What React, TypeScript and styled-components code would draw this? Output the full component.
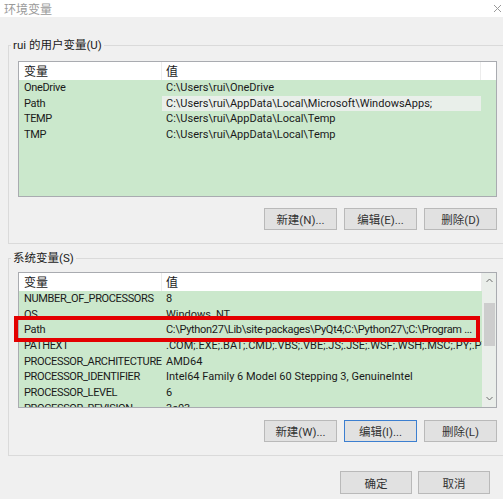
import React from "react";
import styled, { createGlobalStyle } from "styled-components";

const FONT = `Roboto, "Noto Sans CJK SC", sans-serif`;

const Global = createGlobalStyle`
  html, body { margin: 0; padding: 0; background: #f0f0f0; }
  body {
    font-family: ${FONT};
    font-size: 11px;
    color: #1a1a1a;
  }
`;

const Window = styled.div`
  width: 503px;
  height: 499px;
  overflow: hidden;
  display: flex;
  flex-direction: column;
  background: #f0f0f0;
`;

const TitleBar = styled.div`
  height: 17px;
  background: #ffffff;
  display: flex;
  align-items: center;
  justify-content: space-between;
  padding-left: 4px;
  color: #9a9a9a;
  font-family: "Noto Sans CJK SC", sans-serif;
  font-size: 12px;
`;

const Close = styled.svg`
  width: 7px;
  height: 7px;
  margin-right: 2px;
`;

const Body = styled.div`
  display: flex;
  flex-direction: column;
  padding: 20px 0 0 8px;
`;

const Group = styled.fieldset<{ $top?: number }>`
  margin: ${(p) => p.$top ?? 0}px -20px 0 0;
  padding: ${(p) => (p.$top ? 6 : 8)}px 0 13px 9px;
  border: 1px solid #dadada;
  border-right: none;
  min-width: 0;
`;

const Legend = styled.legend`
  margin-left: -7px;
  padding: 0 2px;
  line-height: 16px;
  font-family: ${FONT};
  font-size: 11.5px;
  color: #1a1a1a;
`;

const List = styled.div`
  position: relative;
  width: 479px;
  height: 136px;
  box-sizing: border-box;
  border: 1px solid #a9abb0;
  background: #cbe8cc;
  display: flex;
  overflow: hidden;
`;

const ListMain = styled.div`
  flex: 1;
  min-width: 0;
  display: flex;
  flex-direction: column;
`;

const Header = styled.div<{ $cols: string }>`
  height: 18px;
  flex: none;
  background: #ffffff;
  display: grid;
  grid-template-columns: ${(p) => p.$cols};
  align-items: stretch;
`;

const HeadCell = styled.div<{ $pad: number }>`
  padding-left: ${(p) => p.$pad}px;
  line-height: 18px;
  font-family: "Noto Sans CJK SC", sans-serif;
  font-size: 12px;
  border-right: 1px solid #ececec;
  white-space: nowrap;
`;

const Row = styled.div<{ $cols: string }>`
  height: 15.67px;
  flex: none;
  display: grid;
  grid-template-columns: ${(p) => p.$cols};
  line-height: 15.67px;
`;

const Cell = styled.div<{ $pad: number; $sel?: boolean; $ls?: number }>`
  padding-left: ${(p) => p.$pad}px;
  white-space: nowrap;
  overflow: hidden;
  letter-spacing: ${(p) => p.$ls ?? 0}px;
  background: ${(p) => (p.$sel ? "#e9efea" : "transparent")};
`;

const Scrollbar = styled.div`
  width: 14px;
  flex: none;
  background: #eaeeea;
  display: flex;
  flex-direction: column;
  align-items: center;
`;

const Arrow = styled.svg<{ $mt?: number; $mb?: number }>`
  width: 7px;
  height: 5px;
  flex: none;
  margin-top: ${(p) => p.$mt ?? 0}px;
  margin-bottom: ${(p) => p.$mb ?? 0}px;
`;

const Thumb = styled.div`
  width: 11px;
  height: 43px;
  background: #cdcdcd;
  margin-top: 20px;
`;

const Spacer = styled.div`
  flex: 1;
`;

const Highlight = styled.div`
  position: absolute;
  left: -4px;
  top: 44px;
  width: 466px;
  height: 26px;
  box-sizing: border-box;
  border: 4px solid #e30000;
  pointer-events: none;
`;

const ListWrap = styled.div`
  position: relative;
  width: 479px;
`;

const ButtonRow = styled.div<{ $mt: number }>`
  width: 479px;
  display: flex;
  justify-content: flex-end;
  gap: 7px;
  margin-top: ${(p) => p.$mt}px;
`;

const Button = styled.button<{ $focus?: boolean; $w?: number; $h?: number }>`
  width: ${(p) => p.$w ?? 73}px;
  height: ${(p) => p.$h ?? 22}px;
  box-sizing: border-box;
  background: #e1e1e1;
  border: 1px solid ${(p) => (p.$focus ? "#3c7fd0" : "#b9b9b9")};
  font-family: ${FONT};
  font-size: 11.5px;
  color: #333;
  padding: 0;
`;

const Footer = styled.div`
  display: flex;
  justify-content: flex-end;
  gap: 6px;
  padding: 15px 13px 0 0;
`;

const COLS1 = "143px 319px 1fr";
const COLS2 = "143px 1fr";
const NAME_LS = -0.35;

const userVars = [
  ["OneDrive", "C:\\Users\\rui\\OneDrive"],
  ["Path", "C:\\Users\\rui\\AppData\\Local\\Microsoft\\WindowsApps;"],
  ["TEMP", "C:\\Users\\rui\\AppData\\Local\\Temp"],
  ["TMP", "C:\\Users\\rui\\AppData\\Local\\Temp"],
];

const sysVars = [
  ["NUMBER_OF_PROCESSORS", "8"],
  ["OS", "Windows_NT"],
  ["Path", "C:\\Python27\\Lib\\site-packages\\PyQt4;C:\\Python27\\;C:\\Program ..."],
  ["PATHEXT", ".COM;.EXE;.BAT;.CMD;.VBS;.VBE;.JS;.JSE;.WSF;.WSH;.MSC;.PY;.PYW"],
  ["PROCESSOR_ARCHITECTURE", "AMD64"],
  ["PROCESSOR_IDENTIFIER", "Intel64 Family 6 Model 60 Stepping 3, GenuineIntel"],
  ["PROCESSOR_LEVEL", "6"],
  ["PROCESSOR_REVISION", "3c03"],
];

export default function App() {
  return (
    <Window>
      <Global />
      <TitleBar>
        <span>环境变量</span>
        <Close viewBox="0 0 7 7">
          <path d="M0 0L7 7M7 0L0 7" stroke="#9a9a9a" strokeWidth="1" />
        </Close>
      </TitleBar>
      <Body>
        <Group>
          <Legend>rui 的用户变量(U)</Legend>
          <List>
            <ListMain>
              <Header $cols={COLS1}>
                <HeadCell $pad={5}>变量</HeadCell>
                <HeadCell $pad={4}>值</HeadCell>
                <span />
              </Header>
              {userVars.map(([n, v]) => (
                <Row key={n} $cols={COLS1}>
                  <Cell $pad={5} $ls={NAME_LS}>{n}</Cell>
                  <Cell $pad={4} $sel={n === "Path"}>{v}</Cell>
                  <span />
                </Row>
              ))}
            </ListMain>
          </List>
          <ButtonRow $mt={11}>
            <Button>新建(N)...</Button>
            <Button>编辑(E)...</Button>
            <Button>删除(D)</Button>
          </ButtonRow>
        </Group>
        <Group $top={6}>
          <Legend>系统变量(S)</Legend>
          <ListWrap>
            <List>
              <ListMain>
                <Header $cols={COLS2}>
                  <HeadCell $pad={5}>变量</HeadCell>
                  <HeadCell $pad={4}>值</HeadCell>
                </Header>
                {sysVars.map(([n, v]) => (
                  <Row key={n} $cols={COLS2}>
                    <Cell $pad={5} $ls={NAME_LS}>{n}</Cell>
                    <Cell $pad={4} $ls={n === "Path" ? -0.3 : 0}>{v}</Cell>
                  </Row>
                ))}
              </ListMain>
              <Scrollbar>
                <Arrow viewBox="0 0 7 5" $mt={5}>
                  <path d="M0.5 4L3.5 1L6.5 4" stroke="#6d6d6d" fill="none" strokeWidth="1" />
                </Arrow>
                <Thumb />
                <Spacer />
                <Arrow viewBox="0 0 7 5" $mb={6}>
                  <path d="M0.5 1L3.5 4L6.5 1" stroke="#6d6d6d" fill="none" strokeWidth="1" />
                </Arrow>
              </Scrollbar>
            </List>
            <Highlight />
          </ListWrap>
          <ButtonRow $mt={12}>
            <Button>新建(W)...</Button>
            <Button $focus>编辑(I)...</Button>
            <Button>删除(L)</Button>
          </ButtonRow>
        </Group>
        <Footer>
          <Button $w={72} $h={23}>确定</Button>
          <Button $w={72} $h={23}>取消</Button>
        </Footer>
      </Body>
    </Window>
  );
}
